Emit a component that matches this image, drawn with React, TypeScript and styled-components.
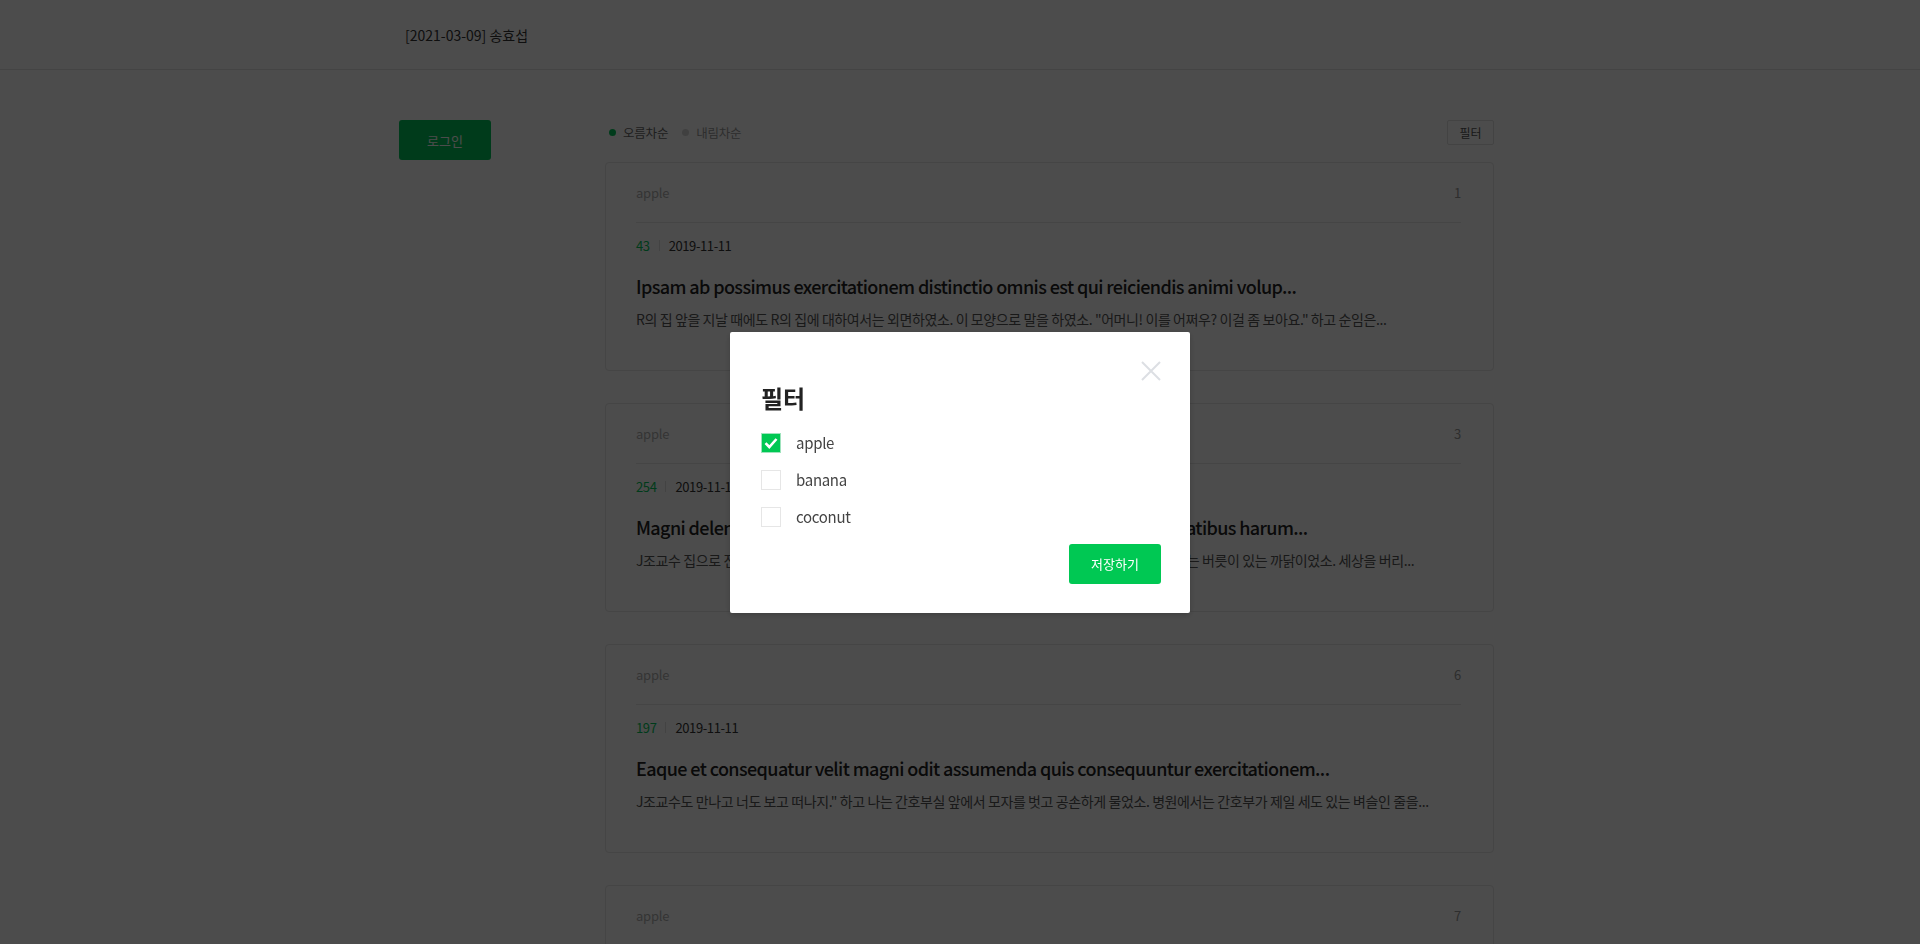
import React from "react";
import styled, { createGlobalStyle } from "styled-components";

const GREEN = "#03c75a";

const Global = createGlobalStyle`
  html, body { margin: 0; padding: 0; height: 100%; overflow: hidden; }
  body { font-family: "Noto Sans CJK KR", "Noto Sans", sans-serif; background: #fff; color: #333; }
  * { box-sizing: border-box; }
`;

const Shell = styled.div`
  display: flex;
  flex-direction: column;
  height: 100vh;
`;

const Header = styled.header`
  flex: 0 0 70px;
  height: 70px;
  border-bottom: 1px solid #e3e3e3;
  display: flex;
  align-items: center;
`;

const HeaderInner = styled.div`
  width: 1122px;
  margin: 0 auto;
  padding-left: 6px;
  padding-right: 14px;
  font-size: 14px;
  color: #333;
`;

const Scroller = styled.main`
  flex: 1;
  overflow-y: scroll;
  &::-webkit-scrollbar { width: 14px; }
  &::-webkit-scrollbar-track { background: #f2f2f2; border-left: 1px solid #e2e2e2; }
  &::-webkit-scrollbar-thumb {
    background: #c6c6c6;
    border-radius: 7px;
    border: 3px solid transparent;
    background-clip: padding-box;
  }
`;

const Container = styled.div`
  width: 1122px;
  margin: 0 auto;
  padding: 50px 14px 0 0;
  display: grid;
  grid-template-columns: 206px 889px;
  align-items: start;
`;

const Side = styled.aside``;

const GreenButton = styled.button`
  width: 92px;
  height: 40px;
  border: none;
  border-radius: 3px;
  background: ${GREEN};
  color: #fff;
  font-family: inherit;
  font-size: 13px;
  cursor: pointer;
`;

const Content = styled.section`
  display: flex;
  flex-direction: column;
`;

const SortRow = styled.div`
  display: flex;
  align-items: center;
  justify-content: space-between;
  height: 25px;
  margin-bottom: 17px;
`;

const Radios = styled.div`
  display: flex;
  align-items: center;
  gap: 14px;
  padding-left: 4px;
`;

const RadioItem = styled.label`
  display: flex;
  align-items: center;
  gap: 7px;
  font-size: 12.5px;
  letter-spacing: -0.2px;
  color: ${(p) => (p.$on ? "#666" : "#999")};
`;

const Dot = styled.span`
  width: 7px;
  height: 7px;
  border-radius: 50%;
  background: ${(p) => (p.$on ? GREEN : "#d6d6d6")};
`;

const FilterButton = styled.button`
  width: 47px;
  height: 25px;
  border: 1px solid #e0e0e0;
  border-radius: 2px;
  background: #fff;
  color: #555;
  font-family: inherit;
  font-size: 12px;
  padding: 0;
`;

const CardList = styled.div`
  display: flex;
  flex-direction: column;
  gap: 32px;
  padding-bottom: 40px;
`;

const Card = styled.article`
  height: 209px;
  border: 1px solid #e6e6e6;
  border-radius: 4px;
  padding: 0 32px 0 30px;
  background: #fff;
`;

const CardHead = styled.div`
  height: 60px;
  border-bottom: 1px solid #e6e6e6;
  display: flex;
  align-items: center;
  justify-content: space-between;
  font-size: 13px;
  letter-spacing: -0.2px;
  color: #b0b0b0;
`;

const CardId = styled.span`
  color: #999;
`;

const Meta = styled.div`
  margin-top: 12px;
  display: flex;
  align-items: center;
  height: 20px;
  font-size: 13px;
  letter-spacing: -0.4px;
  color: #333;
`;

const Count = styled.span`
  color: ${GREEN};
`;

const Sep = styled.span`
  width: 1px;
  height: 11px;
  background: #e0e0e0;
  margin: 0 9px;
`;

const Title = styled.h3`
  margin: 18px 0 0;
  font-size: 18px;
  line-height: 26px;
  font-weight: 500;
  letter-spacing: -0.6px;
  color: #222;
  white-space: nowrap;
`;

const Desc = styled.p`
  margin: 10px 0 0;
  font-size: 14px;
  line-height: 20px;
  letter-spacing: -0.4px;
  color: #555;
  white-space: nowrap;
`;

const Overlay = styled.div`
  position: fixed;
  inset: 0;
  background: rgba(0, 0, 0, 0.7);
  display: flex;
  align-items: center;
  justify-content: center;
`;

const Modal = styled.div`
  position: relative;
  width: 460px;
  background: #fff;
  border-radius: 2px;
  padding: 48px 29px 29px 31px;
  box-shadow: 0 2px 6px rgba(0, 0, 0, 0.2);
`;

const CloseButton = styled.button`
  position: absolute;
  top: 29px;
  right: 29px;
  width: 20px;
  height: 20px;
  padding: 0;
  border: none;
  background: none;
  display: flex;
`;

const ModalTitle = styled.h2`
  margin: 0;
  font-size: 24px;
  line-height: 36px;
  font-weight: 700;
  color: #222;
`;

const CheckList = styled.div`
  margin-top: 17px;
  display: flex;
  flex-direction: column;
  gap: 17px;
`;

const CheckRow = styled.label`
  display: flex;
  align-items: center;
  gap: 15px;
  height: 20px;
  font-size: 15px;
  letter-spacing: -0.3px;
  color: #444;
`;

const Box = styled.span`
  width: 20px;
  height: 20px;
  border: 1px solid ${(p) => (p.$on ? "#9fe3bd" : "#e6e6e6")};
  background: ${(p) => (p.$on ? "#00c853" : "#fff")};
  display: flex;
  align-items: center;
  justify-content: center;
`;

const ModalFooter = styled.div`
  margin-top: 17px;
  display: flex;
  justify-content: flex-end;
`;

const SaveButton = styled(GreenButton)`
  background: #00c853;
`;

const cards = [
  {
    id: 1, count: 43,
    title: "Ipsam ab possimus exercitationem distinctio omnis est qui reiciendis animi volup...",
    desc: "R의 집 앞을 지날 때에도 R의 집에 대하여서는 외면하였소. 이 모양으로 말을 하였소. \"어머니! 이를 어쩌우? 이걸 좀 보아요.\" 하고 순임은...",
  },
  {
    id: 3, count: 254,
    title: "Magni deleniti ut quia voluptas rerum quos eius sint dolores et voluptatibus harum...",
    desc: "J조교수 집으로 전화를 걸어 보았으나 그는 늘 이 시간이면 산보를 나가 없다 하니, 밤마다 산보를 나가는 버릇이 있는 까닭이었소. 세상을 버리...",
  },
  {
    id: 6, count: 197,
    title: "Eaque et consequatur velit magni odit assumenda quis consequuntur exercitationem...",
    desc: "J조교수도 만나고 너도 보고 떠나지.\" 하고 나는 간호부실 앞에서 모자를 벗고 공손하게 물었소. 병원에서는 간호부가 제일 세도 있는 벼슬인 줄을...",
  },
  {
    id: 7, count: 88,
    title: "Voluptatem quia et sed rerum dolorum sit consequatur ratione veniam nihil...",
    desc: "나는 그 말에 대답할 바를 몰라서 한참이나 가만히 있었소. 그러나 이 일이 어찌 될는지 알 수 없는 일이오...",
  },
  {
    id: 9, count: 312,
    title: "Aut ipsa quia et dolorem voluptatibus nesciunt sint est illum repellat...",
    desc: "R의 집 앞을 지날 때에도 R의 집에 대하여서는 외면하였소. 이 모양으로 말을 하였소...",
  },
  {
    id: 11, count: 57,
    title: "Quod dolorum est et enim quia non vero aut rerum consequatur...",
    desc: "J조교수 집으로 전화를 걸어 보았으나 그는 없었소. 세상을 버리...",
  },
  {
    id: 12, count: 143,
    title: "Sit occaecati repellendus est ipsa voluptas quisquam nesciunt...",
    desc: "하고 나는 간호부실 앞에서 모자를 벗고 공손하게 물었소...",
  },
  {
    id: 15, count: 76,
    title: "Nobis et vitae dolores repellendus quia sint eum quas odio...",
    desc: "이걸 좀 보아요.\" 하고 순임은...",
  },
  { id: 18, count: 229, title: "Dolorem eum magni eos aperiam quia...", desc: "병원에서는 간호부가 제일 세도 있는 벼슬인 줄을..." },
  { id: 20, count: 64, title: "Et fugit eligendi deleniti quidem qui sint nihil autem...", desc: "이 모양으로 말을 하였소..." },
  { id: 22, count: 118, title: "Repellat aliquid praesentium dolorem quo...", desc: "세상을 버리..." },
  { id: 25, count: 35, title: "Ullam et saepe reiciendis voluptatem adipisci...", desc: "모자를 벗고 공손하게 물었소..." },
  { id: 27, count: 201, title: "Doloremque illum aliquid sunt...", desc: "R의 집에 대하여서는 외면하였소..." },
  { id: 30, count: 92, title: "Qui et at rerum necessitatibus...", desc: "간호부실 앞에서..." },
];

const filters = [
  { name: "apple", on: true },
  { name: "banana", on: false },
  { name: "coconut", on: false },
];

export default function App() {
  return (
    <Shell>
      <Global />
      <Header>
        <HeaderInner>[2021-03-09] 송효섭</HeaderInner>
      </Header>
      <Scroller>
        <Container>
          <Side>
            <GreenButton>로그인</GreenButton>
          </Side>
          <Content>
            <SortRow>
              <Radios>
                <RadioItem $on>
                  <Dot $on />
                  오름차순
                </RadioItem>
                <RadioItem>
                  <Dot />
                  내림차순
                </RadioItem>
              </Radios>
              <FilterButton>필터</FilterButton>
            </SortRow>
            <CardList>
              {cards.map((c) => (
                <Card key={c.id}>
                  <CardHead>
                    <span>apple</span>
                    <CardId>{c.id}</CardId>
                  </CardHead>
                  <Meta>
                    <Count>{c.count}</Count>
                    <Sep />
                    2019-11-11
                  </Meta>
                  <Title>{c.title}</Title>
                  <Desc>{c.desc}</Desc>
                </Card>
              ))}
            </CardList>
          </Content>
        </Container>
      </Scroller>
      <Overlay>
        <Modal>
          <CloseButton aria-label="close">
            <svg width="20" height="20" viewBox="0 0 20 20">
              <path d="M1 1L19 19M19 1L1 19" stroke="#dcdfe3" strokeWidth="2" />
            </svg>
          </CloseButton>
          <ModalTitle>필터</ModalTitle>
          <CheckList>
            {filters.map((f) => (
              <CheckRow key={f.name}>
                <Box $on={f.on}>
                  {f.on && (
                    <svg width="14" height="12" viewBox="0 0 14 12">
                      <path d="M1.5 6.2L5.3 10L12.5 2" stroke="#fff" strokeWidth="2.6" fill="none" />
                    </svg>
                  )}
                </Box>
                {f.name}
              </CheckRow>
            ))}
          </CheckList>
          <ModalFooter>
            <SaveButton>저장하기</SaveButton>
          </ModalFooter>
        </Modal>
      </Overlay>
    </Shell>
  );
}
